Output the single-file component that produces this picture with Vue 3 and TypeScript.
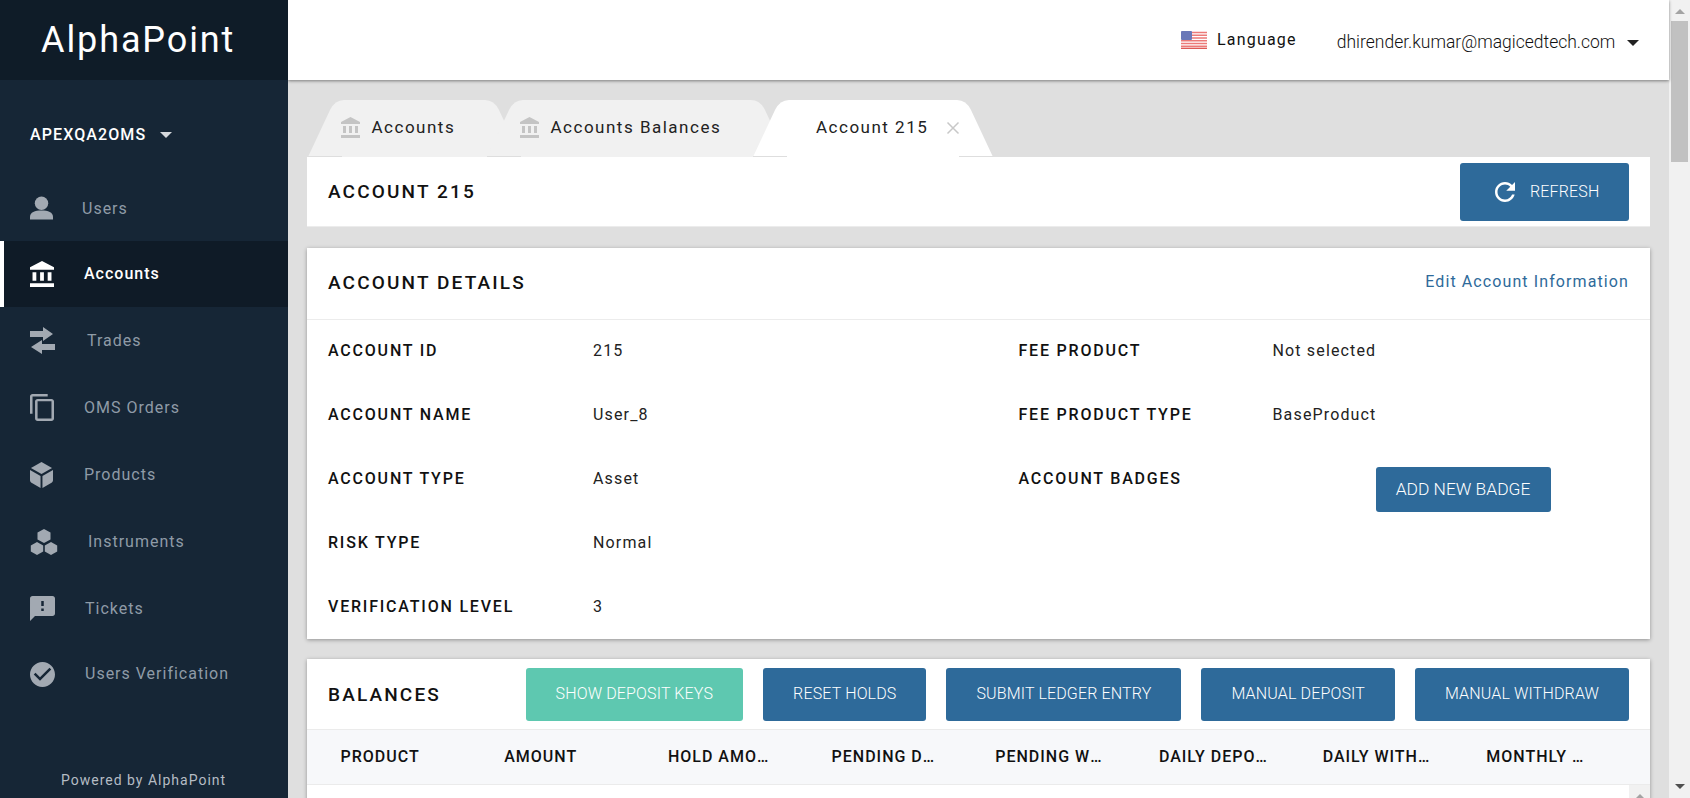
<script setup lang="ts">
interface NavItem {
  label: string
  icon: string
  gap: number
  height: number
  lift: number
  active?: boolean
}

const nav: NavItem[] = [
  { label: 'Users', icon: 'users', gap: 29, height: 66, lift: 0 },
  { label: 'Accounts', icon: 'bank', gap: 30, height: 66, lift: 2, active: true },
  { label: 'Trades', icon: 'swap', gap: 32, height: 67, lift: 1 },
  { label: 'OMS Orders', icon: 'copy', gap: 30, height: 67, lift: 0 },
  { label: 'Products', icon: 'cube', gap: 31, height: 67, lift: 0 },
  { label: 'Instruments', icon: 'hex', gap: 30, height: 67, lift: 0 },
  { label: 'Tickets', icon: 'ticket', gap: 30, height: 66, lift: 0 },
  { label: 'Users Verification', icon: 'check', gap: 30, height: 66, lift: 2 },
]

interface Tab {
  label: string
  width: number
  active?: boolean
}

const tabs: Tab[] = [
  { label: 'Accounts', width: 213 },
  { label: 'Accounts Balances', width: 300 },
  { label: 'Account 215', width: 240, active: true },
]

const tabPath = (w: number): string =>
  `M0 57L22 10Q27 0 36 0H${w - 36}Q${w - 27} 0 ${w - 22} 10L${w} 57Z`

const leftDetails = [
  ['ACCOUNT ID', '215'],
  ['ACCOUNT NAME', 'User_8'],
  ['ACCOUNT TYPE', 'Asset'],
  ['RISK TYPE', 'Normal'],
  ['VERIFICATION LEVEL', '3'],
]

const rightDetails = [
  ['FEE PRODUCT', 'Not selected'],
  ['FEE PRODUCT TYPE', 'BaseProduct'],
]

const actions = ['RESET HOLDS', 'SUBMIT LEDGER ENTRY', 'MANUAL DEPOSIT', 'MANUAL WITHDRAW']

const columns = [
  'PRODUCT',
  'AMOUNT',
  'HOLD AMOUNT',
  'PENDING DEPOSITS',
  'PENDING WITHDRAWS',
  'DAILY DEPOSITS',
  'DAILY WITHDRAWS',
  'MONTHLY WITHDRAWS',
]

const bankPath =
  'M4 10v7h3v-7H4zm6 0v7h3v-7h-3zM2 22h19v-3H2v3zm14-12v7h3v-7h-3zm-4.5-9L2 6v2h19V6l-9.5-5z'
</script>

<template>
  <div class="app">
    <aside class="sidebar">
      <div class="logo">AlphaPoint</div>
      <div class="oms">
        <span>APEXQA2OMS</span>
        <i class="caret caret-light"></i>
      </div>
      <nav class="nav">
        <div
          v-for="item in nav"
          :key="item.label"
          class="nav-item"
          :class="{ active: item.active }"
          :style="{ height: item.height + 'px' }"
        >
          <svg v-if="item.icon === 'users'" class="ico" width="23" height="24" viewBox="0 0 24 24">
            <circle cx="12" cy="7" r="7" />
            <path d="M0 24v-3c0-4.500 5-6.500 12-6.500s12 2 12 6.500v3z" />
          </svg>
          <svg v-else-if="item.icon === 'bank'" class="ico" width="24" height="26" viewBox="2 1 19 21" preserveAspectRatio="none">
            <path :d="bankPath" />
          </svg>
          <svg v-else-if="item.icon === 'swap'" class="ico" width="25" height="28" viewBox="0 0 25 28">
            <path d="M0 4h13V0l10 7-10 7v-4H0z" />
            <path d="M25 17H12v-4L1 20l11 7v-4h13z" />
          </svg>
          <svg v-else-if="item.icon === 'copy'" class="ico" width="24" height="27" viewBox="2 1 19 22" preserveAspectRatio="none">
            <path d="M16 1H4c-1.100 0-2 .9-2 2v14h2V3h12V1zm3 4H8c-1.100 0-2 .9-2 2v14c0 1.100.9 2 2 2h11c1.100 0 2-.9 2-2V7c0-1.100-.9-2-2-2zm0 16H8V7h11v14z" />
          </svg>
          <svg v-else-if="item.icon === 'cube'" class="ico" width="23" height="26" viewBox="0 0 24 26" preserveAspectRatio="none">
            <path d="M12 0l11 6-11 6L1 6z" />
            <path d="M0 8l11 6v12l-9-5c-1.300-.7-2-1.700-2-3z" />
            <path d="M24 8l-11 6v12l9-5c1.300-.7 2-1.700 2-3z" />
          </svg>
          <svg v-else-if="item.icon === 'hex'" class="ico" width="28" height="26" viewBox="0 0 28 26">
            <path d="M14 0l6.500 3.600v6.800L14 14l-6.500-3.600V3.600z" />
            <path d="M7 13l6.200 3.400v6.200L7 26l-6.200-3.400v-6.200z" />
            <path d="M21 13l6.200 3.400v6.200L21 26l-6.200-3.400v-6.200z" />
          </svg>
          <svg v-else-if="item.icon === 'ticket'" class="ico" width="25" height="25" viewBox="2 2 20 20">
            <path d="M20 2H4c-1.100 0-1.990.9-1.990 2L2 22l4-4h14c1.100 0 2-.9 2-2V4c0-1.100-.9-2-2-2zm-7 12h-2v-2h2v2zm0-4h-2V6h2v4z" />
          </svg>
          <svg v-else class="ico" width="25" height="25" viewBox="2 2 20 20">
            <path d="M12 2C6.480 2 2 6.480 2 12s4.480 10 10 10 10-4.480 10-10S17.520 2 12 2zm-2 15l-5-5 1.410-1.410L10 14.170l7.590-7.590L19 8l-9 9z" />
          </svg>
          <span class="nav-label" :style="{ marginLeft: item.gap + 'px', marginBottom: item.lift + 'px' }">{{ item.label }}</span>
        </div>
      </nav>
      <div class="powered">Powered by AlphaPoint</div>
    </aside>

    <div class="main">
      <header class="topbar">
        <svg class="flag" width="26" height="18" viewBox="0 0 26 18">
          <rect width="26" height="18" rx="2" fill="#fff" />
          <path
            d="M0 1.500h26M0 4.300h26M0 7h26M0 9.800h26M0 12.500h26M0 15.300h26"
            stroke="#ec7a78"
            stroke-width="1.400"
            fill="none"
          />
          <rect y="16.600" width="26" height="1.400" fill="#dd5a57" />
          <rect width="11" height="9" rx="1" fill="#6a78b8" />
        </svg>
        <span class="language">Language</span>
        <span class="email">dhirender.kumar@magicedtech.com</span>
        <i class="caret caret-dark"></i>
      </header>

      <div class="content">
        <div class="tabs">
          <div
            v-for="tab in tabs"
            :key="tab.label"
            class="tab"
            :class="{ 'tab-active': tab.active }"
            :style="{ width: tab.width + 'px' }"
          >
            <svg class="tab-shape" :width="tab.width" height="57" :viewBox="`0 0 ${tab.width} 57`">
              <path :d="tabPath(tab.width)" />
              <rect x="0" y="56" width="34" height="1" fill="#dedede" />
              <rect :x="tab.width - 34" y="56" width="34" height="1" fill="#dedede" />
            </svg>
            <svg v-if="!tab.active" class="tab-icon" width="19" height="21" viewBox="2 1 19 21" preserveAspectRatio="none">
              <path :d="bankPath" />
            </svg>
            <span class="tab-label">{{ tab.label }}</span>
            <svg v-if="tab.active" class="tab-close" width="14" height="14" viewBox="0 0 14 14">
              <path d="M1.500 1.500l11 11M12.500 1.500l-11 11" stroke="#c8c8c8" stroke-width="1.500" fill="none" />
            </svg>
          </div>
        </div>

        <section class="title-card">
          <h2 class="heading">ACCOUNT 215</h2>
          <button class="btn refresh" type="button">
            <svg width="20" height="20" viewBox="4 4 16 16">
              <path fill="#fff" d="M17.650 6.350C16.200 4.900 14.210 4 12 4c-4.420 0-7.990 3.580-7.990 8s3.570 8 7.990 8c3.730 0 6.840-2.550 7.730-6h-2.080c-.82 2.330-3.040 4-5.650 4-3.310 0-6-2.690-6-6s2.690-6 6-6c1.660 0 3.140.69 4.220 1.780L13 11h7V4l-2.350 2.350z" />
            </svg>
            <span>REFRESH</span>
          </button>
        </section>

        <section class="card details">
          <div class="card-head">
            <h2 class="heading head-up">ACCOUNT DETAILS</h2>
            <a class="edit">Edit Account Information</a>
          </div>
          <div class="detail-body">
            <div class="col col-left">
              <div v-for="row in leftDetails" :key="row[0]" class="row">
                <span class="label">{{ row[0] }}</span>
                <span class="value">{{ row[1] }}</span>
              </div>
            </div>
            <div class="col col-right">
              <div v-for="row in rightDetails" :key="row[0]" class="row">
                <span class="label">{{ row[0] }}</span>
                <span class="value">{{ row[1] }}</span>
              </div>
              <div class="row row-badge">
                <span class="label">ACCOUNT BADGES</span>
                <button class="btn badge-btn" type="button">ADD NEW BADGE</button>
              </div>
            </div>
          </div>
        </section>

        <section class="card balances">
          <div class="bal-head">
            <h2 class="heading">BALANCES</h2>
            <div class="bal-actions">
              <button class="btn btn-green" type="button">SHOW DEPOSIT KEYS</button>
              <button v-for="a in actions" :key="a" class="btn" type="button">{{ a }}</button>
            </div>
          </div>
          <div class="table-head">
            <div v-for="c in columns" :key="c" class="th"><span>{{ c }}</span></div>
          </div>
          <div class="table-body">
            <div class="inner-scroll"><i class="arrow arrow-up"></i></div>
          </div>
        </section>
      </div>
    </div>

    <div class="page-scroll">
      <i class="arrow arrow-up"></i>
      <div class="thumb"></div>
      <i class="arrow arrow-down"></i>
    </div>
  </div>
</template>

<style>
html,
body {
  margin: 0;
  overflow: hidden;
}
</style>

<style scoped>
.app {
  display: flex;
  width: 1690px;
  height: 798px;
  overflow: hidden;
  background: #dfdfdf;
  font-family: Roboto, 'Liberation Sans', sans-serif;
  color: #111;
}

.sidebar {
  flex: 0 0 287px;
  display: flex;
  flex-direction: column;
  background: #162636;
  position: relative;
  z-index: 2;
}
.logo {
  width: 288px;
  height: 80px;
  box-sizing: border-box;
  padding-left: 41px;
  background: #0f1c28;
  color: #fff;
  font-size: 36px;
  font-weight: 400;
  letter-spacing: 1.9px;
  line-height: 81px;
}
.oms {
  height: 95px;
  box-sizing: border-box;
  padding: 14px 0 0 30px;
  display: flex;
  align-items: center;
  color: #fff;
  font-size: 16px;
  font-weight: 500;
  letter-spacing: 1.1px;
}
.caret {
  display: block;
  width: 0;
  height: 0;
  border-style: solid;
  border-color: transparent;
  border-width: 6px 6.5px 0;
}
.caret-light {
  margin-left: 14px;
  border-top-color: #d5d8dc;
}
.caret-dark {
  margin-left: 12px;
  margin-top: 6px;
  border-top-color: #222;
}
.nav {
  display: flex;
  flex-direction: column;
}
.nav-item {
  box-sizing: border-box;
  display: flex;
  align-items: center;
  padding-left: 30px;
  color: #8f9ba7;
  font-size: 16px;
  letter-spacing: 1px;
}
.nav-item .ico {
  fill: #a2a9b2;
  flex: none;
}
.nav-item.active {
  background: #0f1b27;
  color: #fff;
  font-weight: 500;
  box-shadow: inset 4px 0 0 #fff;
}
.nav-item.active .ico {
  fill: #fff;
}
.powered {
  position: absolute;
  left: 61px;
  top: 771px;
  color: #b5bcc4;
  font-size: 14px;
  letter-spacing: 1px;
  line-height: 18px;
}

.main {
  flex: 1;
  min-width: 0;
  display: flex;
  flex-direction: column;
}
.topbar {
  flex: 0 0 80px;
  box-sizing: border-box;
  display: flex;
  align-items: center;
  padding-left: 893px;
  background: #fff;
  box-shadow: 0 1px 3px rgba(0, 0, 0, 0.45);
  position: relative;
  z-index: 1;
}
.flag {
  flex: none;
}
.language {
  margin-left: 10px;
  margin-bottom: 1px;
  font-size: 16px;
  letter-spacing: 1.2px;
}
.email {
  margin-left: 40px;
  margin-top: 4px;
  font-size: 17.5px;
  font-weight: 300;
  white-space: nowrap;
}
.content {
  flex: 1;
  box-sizing: border-box;
  padding: 20px 19px 0 19px;
  min-height: 0;
}

.tabs {
  display: flex;
  height: 57px;
  padding-left: 1px;
}
.tab {
  position: relative;
  flex: none;
  height: 57px;
  box-sizing: border-box;
  padding-left: 33px;
  display: flex;
  align-items: center;
  padding-bottom: 3px;
  font-size: 17px;
  letter-spacing: 1.5px;
  color: #222;
}
.tab + .tab {
  margin-left: -34px;
}
.tab-shape {
  position: absolute;
  left: 0;
  top: 0;
  fill: #f1f1f1;
}
.tab-active .tab-shape {
  fill: #fff;
}
.tab-icon {
  position: relative;
  fill: #c4c4c4;
  flex: none;
  margin-right: 11.500px;
}
.tab-label {
  position: relative;
  white-space: nowrap;
}
.tab-active {
  padding-left: 63px;
}
.tab-close {
  position: relative;
  margin-left: 18px;
  margin-top: 1px;
}

.title-card {
  height: 70px;
  box-sizing: border-box;
  display: flex;
  align-items: center;
  justify-content: space-between;
  padding: 0 21px;
  background: #fff;
  border-bottom: 1px solid #ececec;
}
.heading {
  margin: 0;
  font-size: 19px;
  font-weight: 500;
  letter-spacing: 2.15px;
  color: #111;
  white-space: nowrap;
}
.head-up {
  margin-bottom: 2px;
}
.btn {
  border: 0;
  border-radius: 3px;
  background: #2e6a9a;
  color: #fff;
  font-family: inherit;
  font-size: 16px;
  font-weight: 300;
  letter-spacing: 0.15px;
  white-space: nowrap;
  padding: 0 30px;
}
.refresh {
  width: 169px;
  height: 58px;
  display: flex;
  align-items: center;
  padding: 0 0 0 35px;
  gap: 15px;
}
.card {
  margin-top: 21px;
  background: #fff;
  box-shadow: 0 1px 4px rgba(0, 0, 0, 0.35);
}
.card-head {
  height: 72px;
  box-sizing: border-box;
  display: flex;
  align-items: center;
  justify-content: space-between;
  padding: 0 21px;
  border-bottom: 1px solid #ececec;
}
.edit {
  color: #2e6a9a;
  font-size: 16px;
  letter-spacing: 1.1px;
  margin-top: -4px;
}
.detail-body {
  display: flex;
  margin-top: -1px;
  padding-left: 21px;
}
.col-left {
  flex: 0 0 690.500px;
}
.col-right {
  flex: 1;
}
.row {
  height: 64px;
  display: flex;
  align-items: flex-start;
  line-height: 64px;
  font-size: 16px;
}
.label {
  font-weight: 500;
  letter-spacing: 1.8px;
  color: #111;
  white-space: nowrap;
}
.col-left .label {
  flex: 0 0 265px;
}
.col-right .label {
  flex: 0 0 254px;
}
.value {
  color: #222;
  letter-spacing: 1.15px;
}
.col-right .row-badge .label {
  flex: 0 0 357px;
}
.badge-btn {
  flex: none;
  width: 175px;
  height: 45px;
  margin-top: 20px;
  padding: 0;
  font-size: 17.400px;
  letter-spacing: 0;
  line-height: 45px;
}
.balances {
  margin-top: 20px;
}
.bal-head {
  height: 70px;
  box-sizing: border-box;
  display: flex;
  align-items: center;
  justify-content: space-between;
  padding: 0 21px;
}
.bal-actions {
  display: flex;
  gap: 20px;
}
.bal-actions .btn {
  height: 53px;
  padding-bottom: 1px;
}
.btn-green {
  background: #5ec8b0;
}
.table-head {
  height: 56px;
  box-sizing: border-box;
  display: grid;
  grid-template-columns: repeat(8, 163.7px);
  align-items: center;
  padding: 0 0 2px 21.500px;
  background: #f7f8fa;
  border-top: 1px solid #ebebeb;
  border-bottom: 1px solid #ebebeb;
  font-size: 16px;
  font-weight: 500;
  letter-spacing: 1px;
}
.th {
  padding-left: 12px;
}
.th span {
  display: block;
  max-width: 110px;
  overflow: hidden;
  text-overflow: ellipsis;
  white-space: nowrap;
}
.table-body {
  height: 60px;
  display: flex;
  justify-content: flex-end;
}
.inner-scroll {
  width: 21px;
  background: #f1f1f1;
  display: flex;
  justify-content: center;
  padding-top: 9px;
  box-sizing: border-box;
}
.page-scroll {
  flex: 0 0 21px;
  box-sizing: border-box;
  display: flex;
  flex-direction: column;
  align-items: center;
  background: #f1f1f1;
  padding-top: 9px;
}
.arrow {
  display: block;
  width: 0;
  height: 0;
  border-style: solid;
  border-color: transparent;
}
.arrow-up {
  border-width: 0 5px 5px;
  border-bottom-color: #a3a3a3;
}
.arrow-down {
  margin-top: 622px;
  border-width: 5px 5px 0;
  border-top-color: #505050;
}
.thumb {
  width: 17px;
  height: 141px;
  margin-top: 7px;
  background: #c1c1c1;
}
</style>
